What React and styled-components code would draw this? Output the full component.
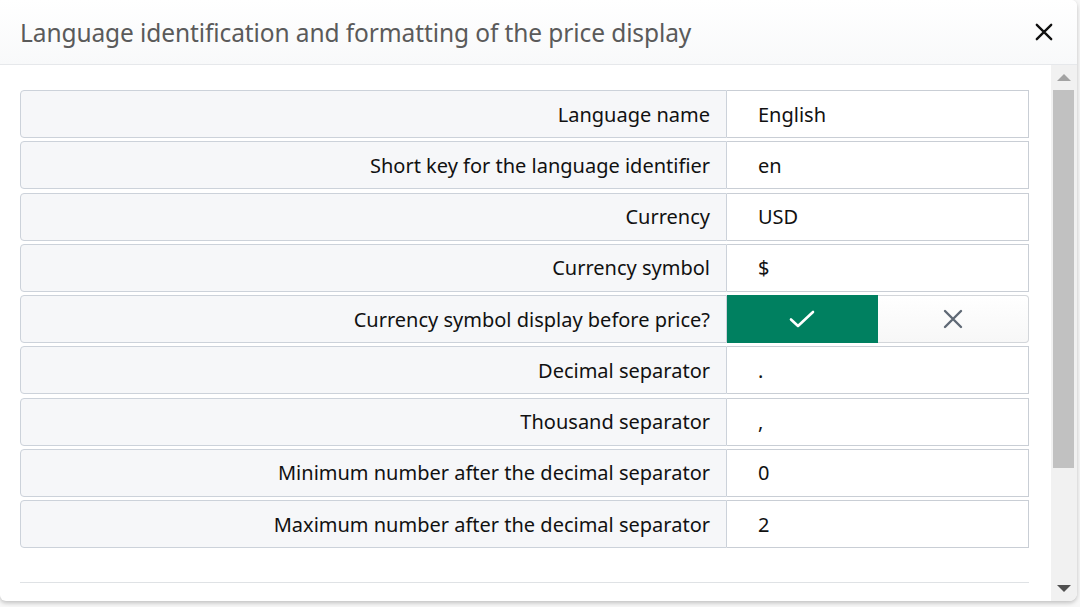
import React from "react";
import styled, { createGlobalStyle } from "styled-components";

const GlobalStyle = createGlobalStyle`
  html, body {
    margin: 0;
    padding: 0;
    background: #ffffff;
  }
  body {
    font-family: "Noto Sans", "Open Sans", Arial, sans-serif;
    overflow: hidden;
  }
`;

const rows = [
  { label: "Language name", value: "English" },
  { label: "Short key for the language identifier", value: "en" },
  { label: "Currency", value: "USD" },
  { label: "Currency symbol", value: "$" },
  { label: "Currency symbol display before price?", toggle: true },
  { label: "Decimal separator", value: "." },
  { label: "Thousand separator", value: "," },
  { label: "Minimum number after the decimal separator", value: "0" },
  { label: "Maximum number after the decimal separator", value: "2" },
];

const Page = styled.div`
  width: 1080px;
  height: 607px;
  background: #f7f7f7;
`;

const Modal = styled.div`
  width: 1077px;
  height: 601px;
  background: #ffffff;
  border-radius: 0 6px 8px 6px;
  box-shadow: 0 2px 4px rgba(0, 0, 0, 0.22);
  display: flex;
  flex-direction: column;
  overflow: hidden;
`;

const Header = styled.div`
  height: 65px;
  flex: none;
  box-sizing: border-box;
  display: flex;
  align-items: center;
  justify-content: space-between;
  padding: 0 22px 0 20px;
  background: linear-gradient(#ffffff, #f8f9fa);
  border-bottom: 1px solid #e6e8eb;
`;

const Title = styled.h2`
  margin: 0;
  font-size: 24.5px;
  font-weight: 400;
  color: #5a5a5a;
  letter-spacing: -0.1px;
`;

const CloseButton = styled.button`
  border: 0;
  background: transparent;
  padding: 0;
  width: 22px;
  height: 22px;
  display: flex;
  align-items: center;
  justify-content: center;
  cursor: pointer;
`;

const Body = styled.div`
  flex: 1;
  display: flex;
  min-height: 0;
`;

const Content = styled.div`
  flex: 1;
  overflow: hidden;
  padding: 25px 22px 0 20px;
`;

const Rows = styled.div`
  display: flex;
  flex-direction: column;
  gap: 3.25px;
`;

const Row = styled.div`
  display: flex;
  height: 48px;
  font-size: 20px;
  color: #111;
`;

const Label = styled.div`
  width: 707px;
  box-sizing: border-box;
  display: flex;
  align-items: center;
  justify-content: flex-end;
  padding-right: 16px;
  background: #f6f7f9;
  border: 1px solid #ccd2da;
  border-radius: 4px 0 0 4px;
`;

const Value = styled.div`
  flex: 1;
  box-sizing: border-box;
  display: flex;
  align-items: center;
  padding-left: 31px;
  border: 1px solid #c9ced5;
  border-left: 0;
`;

const ToggleGroup = styled.div`
  flex: 1;
  display: flex;
`;

const ToggleButton = styled.button`
  flex: 1;
  border: 1px solid ${(p) => (p.$active ? "#008060" : "#d3d6da")};
  border-left: 0;
  background: ${(p) =>
    p.$active ? "#008060" : "linear-gradient(#ffffff, #f7f7f7)"};
  border-radius: ${(p) => (p.$last ? "0 4px 4px 0" : "0")};
  display: flex;
  align-items: center;
  justify-content: center;
  padding: 0;
  cursor: pointer;
`;

const Divider = styled.hr`
  margin: 34px 0 0;
  border: 0;
  border-top: 1px solid #dfe2e5;
`;

const Scrollbar = styled.div`
  width: 26px;
  flex: none;
  background: #f1f1f1;
  display: flex;
  flex-direction: column;
  align-items: center;
`;

const Arrow = styled.div`
  height: 24px;
  flex: none;
  display: flex;
  align-items: center;
  justify-content: center;
`;

const Track = styled.div`
  flex: 1;
  width: 100%;
  display: flex;
  flex-direction: column;
`;

const Thumb = styled.div`
  margin: 1px 3px 0 2px;
  height: 378px;
  background: #c1c1c1;
`;

const CheckIcon = () => (
  <svg width="26" height="20" viewBox="0 0 26 20" fill="none">
    <path d="M2 10.5 L9 17 L24 3" stroke="#fff" strokeWidth="2.6" strokeLinecap="round" strokeLinejoin="round" />
  </svg>
);

const XIcon = ({ size = 20, color = "#5f6975", width = 2.4 }) => (
  <svg width={size} height={size} viewBox="0 0 20 20" fill="none">
    <path d="M2 2 L18 18 M18 2 L2 18" stroke={color} strokeWidth={width} strokeLinecap="round" />
  </svg>
);

const App = () => {
  return (
    <Page>
      <GlobalStyle />
      <Modal>
        <Header>
          <Title>Language identification and formatting of the price display</Title>
          <CloseButton aria-label="Close">
            <XIcon size={18} color="#111" width={2.6} />
          </CloseButton>
        </Header>
        <Body>
          <Content>
            <Rows>
              {rows.map((r) => (
                <Row key={r.label}>
                  <Label>{r.label}</Label>
                  {r.toggle ? (
                    <ToggleGroup>
                      <ToggleButton $active>
                        <CheckIcon />
                      </ToggleButton>
                      <ToggleButton $last>
                        <XIcon />
                      </ToggleButton>
                    </ToggleGroup>
                  ) : (
                    <Value>{r.value}</Value>
                  )}
                </Row>
              ))}
            </Rows>
            <Divider />
          </Content>
          <Scrollbar>
            <Arrow>
              <svg width="14" height="8" viewBox="0 0 14 8">
                <path d="M0 8 L7 1 L14 8 Z" fill="#a3a3a3" />
              </svg>
            </Arrow>
            <Track>
              <Thumb />
            </Track>
            <Arrow>
              <svg width="14" height="8" viewBox="0 0 14 8">
                <path d="M0 0 L7 7 L14 0 Z" fill="#505050" />
              </svg>
            </Arrow>
          </Scrollbar>
        </Body>
      </Modal>
    </Page>
  );
};

export default App;
